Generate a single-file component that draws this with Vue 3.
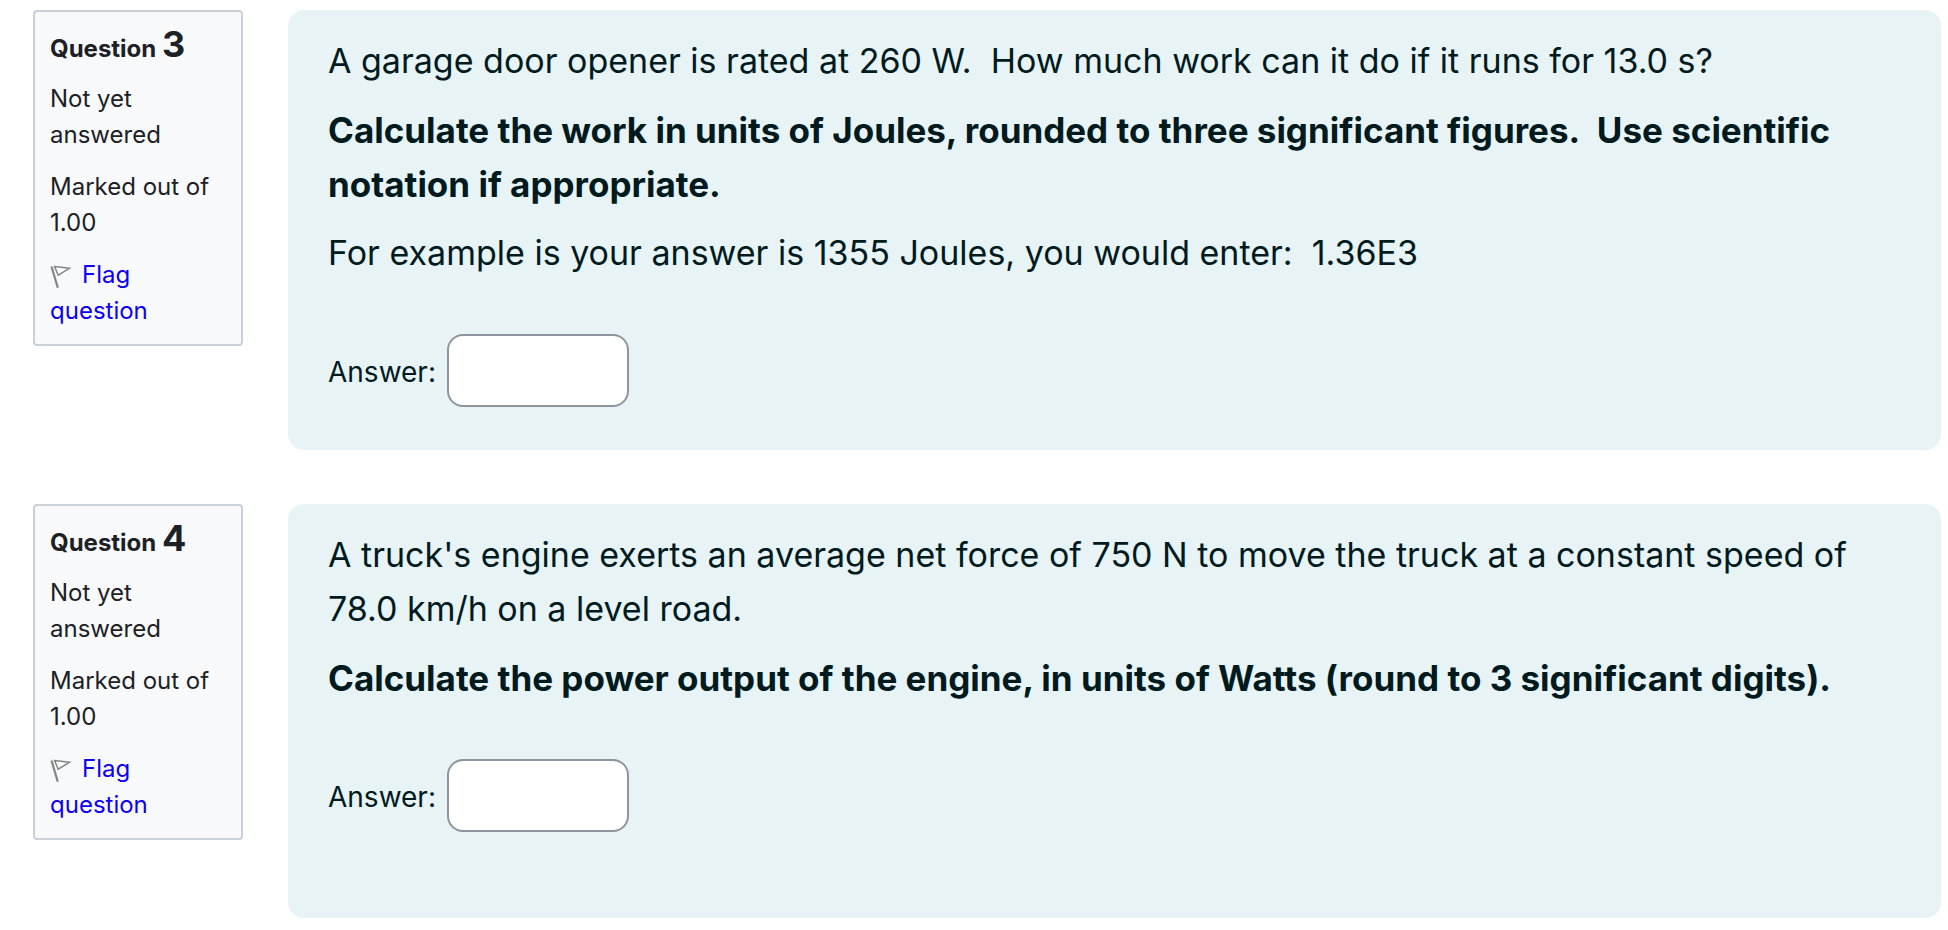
<script setup>
const questions = [
  {
    number: 3,
    paragraphs: [
      { text: 'A garage door opener is rated at 260 W.\u00a0 How much work can it do if it runs for 13.0 s?' },
      {
        text: 'Calculate the work in units of Joules, rounded to three significant figures.\u00a0 Use scientific notation if appropriate.',
        strong: true,
      },
      { text: 'For example is your answer is 1355 Joules, you would enter:\u00a0 1.36E3' },
    ],
  },
  {
    number: 4,
    paragraphs: [
      { text: "A truck's engine exerts an average net force of 750 N to move the truck at a constant speed of 78.0 km/h on a level road." },
      {
        text: 'Calculate the power output of the engine, in units of Watts (round to 3 significant digits).',
        strong: true,
      },
    ],
  },
]
</script>

<template>
  <main class="quiz">
    <section v-for="q in questions" :key="q.number" class="question">
      <aside class="info">
        <h3 class="title">Question <span class="number">{{ q.number }}</span></h3>
        <div class="details">
          <div>Not yet answered</div>
          <div>Marked out of 1.00</div>
          <div>
            <a class="flag" href="#">
              <svg class="flag-icon" viewBox="0 0 24 24" aria-hidden="true">
                <path d="M1.5 1.5 7.8 22.8" stroke="#858585" stroke-width="2.2" fill="none" />
                <path d="M4.6 1.6 19.4 3.3 8.2 10.2Z" stroke="#858585" stroke-width="1.5" fill="#fff" />
              </svg>Flag question</a>
          </div>
        </div>
      </aside>
      <div class="formulation">
        <div class="text">
          <p v-for="(p, i) in q.paragraphs" :key="i">
            <strong v-if="p.strong">{{ p.text }}</strong>
            <template v-else>{{ p.text }}</template>
          </p>
        </div>
        <div class="answer">
          <label :for="`answer-${q.number}`">Answer:</label>
          <input :id="`answer-${q.number}`" type="text" autocomplete="off" />
        </div>
      </div>
    </section>
  </main>
</template>

<style>
body {
  margin: 0;
  background: #fff;
}
</style>

<style scoped>
.quiz {
  display: flex;
  flex-direction: column;
  gap: 54px;
  padding: 10px 7px 10px 33px;
  font-family: Inter, "Liberation Sans", sans-serif;
  color: #1d2125;
}
.question {
  display: flex;
  align-items: flex-start;
  gap: 45px;
}
.info {
  box-sizing: border-box;
  flex: 0 0 210px;
  display: grid;
  gap: 14px;
  padding: 19px 15px 15px;
  border: 2px solid #cad0d7;
  border-radius: 4px;
  background: #f8f9fb;
  font-size: 24px;
  line-height: 36px;
}
.title {
  margin: 0;
  font-size: 24px;
  font-weight: 700;
  line-height: 36px;
}
.number {
  font-size: 36px;
  line-height: 24px;
}
.details {
  display: grid;
  gap: 16px;
}
.flag {
  color: #0f00f0;
  text-decoration: none;
}
.flag-icon {
  width: 24px;
  height: 24px;
  margin-right: 8px;
  vertical-align: -6px;
}
.formulation {
  box-sizing: border-box;
  flex: 1;
  min-width: 0;
  min-height: 414px;
  padding: 24px 40px 43px;
  border-radius: 16px;
  background: #e7f3f5;
  color: #001a1e;
}
.text {
  display: grid;
  gap: 15px;
  font-size: 34px;
  line-height: 54px;
}
.text p {
  margin: 0;
}
.text strong {
  display: block;
  font-size: 35px;
  font-weight: 700;
}
.answer {
  display: flex;
  align-items: center;
  gap: 11px;
  margin-top: 54px;
  font-size: 28px;
  line-height: 45px;
}
.answer label {
  padding-top: 4px;
}
.answer input {
  box-sizing: border-box;
  width: 182px;
  height: 73px;
  padding: 8px 16px;
  border: 2px solid #8f959e;
  border-radius: 16px;
  background: #fff;
  color: inherit;
  font: inherit;
}
</style>
